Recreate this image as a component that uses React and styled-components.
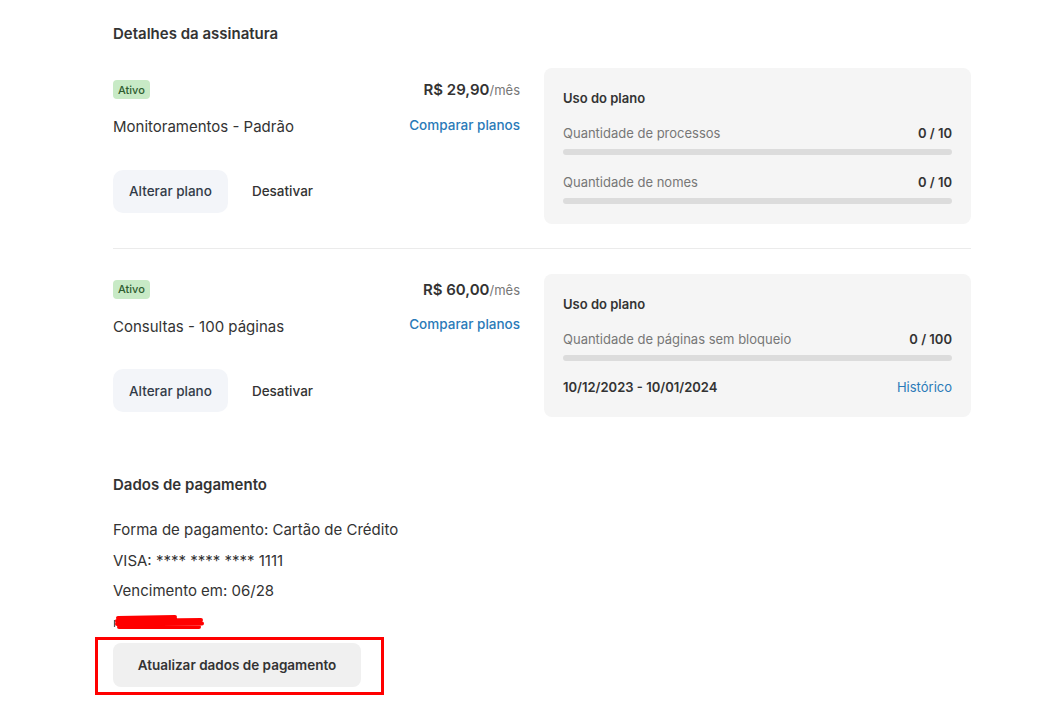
import React from "react";
import styled, { createGlobalStyle } from "styled-components";

const GlobalStyle = createGlobalStyle`
  html, body {
    margin: 0;
    padding: 0;
    background: #fff;
  }
  body {
    font-family: Inter, "Noto Sans", sans-serif;
    color: #333;
    -webkit-font-smoothing: antialiased;
  }
`;

const subscriptions = [
  {
    name: "Monitoramentos - Padrão",
    price: "R$ 29,90",
    metrics: [
      { label: "Quantidade de processos", value: "0 / 10", used: 0 },
      { label: "Quantidade de nomes", value: "0 / 10", used: 0 },
    ],
  },
  {
    name: "Consultas - 100 páginas",
    price: "R$ 60,00",
    metrics: [
      { label: "Quantidade de páginas sem bloqueio", value: "0 / 100", used: 0 },
    ],
    period: "10/12/2023 - 10/01/2024",
  },
];

const App = () => {
  return (
    <>
      <GlobalStyle />
      <Page>
        <SectionTitle>Detalhes da assinatura</SectionTitle>
        {subscriptions.map((sub, i) => (
          <React.Fragment key={sub.name}>
            {i > 0 && <Divider />}
            <PlanRow>
              <PlanInfo>
                <InfoLine>
                  <Badge>Ativo</Badge>
                  <Price>
                    {sub.price}
                    <Per>/mês</Per>
                  </Price>
                </InfoLine>
                <InfoLine $second>
                  <PlanName>{sub.name}</PlanName>
                  <Link href="#">Comparar planos</Link>
                </InfoLine>
                <Actions>
                  <SoftButton>Alterar plano</SoftButton>
                  <GhostButton>Desativar</GhostButton>
                </Actions>
              </PlanInfo>
              <UsageCard>
                <CardTitle>Uso do plano</CardTitle>
                {sub.metrics.map((m) => (
                  <Metric key={m.label}>
                    <MetricRow>
                      <MetricLabel>{m.label}</MetricLabel>
                      <MetricValue>{m.value}</MetricValue>
                    </MetricRow>
                    <Track>
                      <Fill style={{ width: `${m.used}%` }} />
                    </Track>
                  </Metric>
                ))}
                {sub.period && (
                  <PeriodRow>
                    <Period>{sub.period}</Period>
                    <SmallLink href="#">Histórico</SmallLink>
                  </PeriodRow>
                )}
              </UsageCard>
            </PlanRow>
          </React.Fragment>
        ))}

        <PaymentTitle>Dados de pagamento</PaymentTitle>
        <PaymentLines>
          <PayLine>Forma de pagamento: Cartão de Crédito</PayLine>
          <PayLine>VISA: **** **** **** 1111</PayLine>
          <PayLine>Vencimento em: 06/28</PayLine>
          <Redacted>
            {/* marker redaction over the last line */}
            <svg width="92" height="16" viewBox="0 0 92 16">
              <path d="M1.5 6 L1.5 13" stroke="#555" strokeWidth="1.2" />
              <path
                d="M5 4 L62 3 M4 7 L88 6 M4 10 L89 9.5 M6 13 L86 13"
                stroke="#ff0000"
                strokeWidth="4"
                strokeLinecap="round"
                fill="none"
              />
            </svg>
          </Redacted>
        </PaymentLines>
        <Highlight>
          <UpdateButton>Atualizar dados de pagamento</UpdateButton>
        </Highlight>
      </Page>
    </>
  );
};

export default App;

const Page = styled.div`
  width: 858px;
  padding: 24px 0 12px 113px;
  display: flex;
  flex-direction: column;
`;

const SectionTitle = styled.h2`
  margin: 0 0 24px;
  font-size: 15px;
  line-height: 20px;
  font-weight: 600;
  color: #333;
`;

const Divider = styled.div`
  height: 1px;
  background: #ebebeb;
  margin: 24px 0 25px;
`;

const PlanRow = styled.div`
  display: grid;
  grid-template-columns: 407px 427px;
  column-gap: 24px;
  align-items: center;
`;

const PlanInfo = styled.div`
  display: flex;
  flex-direction: column;
`;

const InfoLine = styled.div`
  display: flex;
  justify-content: space-between;
  align-items: center;
  height: ${(p) => (p.$second ? "22px" : "20px")};
  margin-top: ${(p) => (p.$second ? "16px" : "0")};
`;

const Badge = styled.span`
  display: inline-flex;
  align-items: center;
  height: 19px;
  padding: 0 5px;
  border-radius: 4px;
  background: #c8eac6;
  color: #2f5d2f;
  font-size: 11px;
  font-weight: 500;
`;

const Price = styled.span`
  font-size: 15px;
  font-weight: 600;
  color: #333;
`;

const Per = styled.span`
  font-size: 13px;
  font-weight: 400;
  color: #777;
`;

const PlanName = styled.span`
  font-size: 15px;
  color: #333;
`;

const Link = styled.a`
  font-size: 13.5px;
  font-weight: 500;
  color: #2a7ab8;
  text-decoration: none;
  margin-top: -4px;
`;

const Actions = styled.div`
  display: flex;
  align-items: center;
  gap: 8px;
  margin-top: 32px;
`;

const SoftButton = styled.button`
  height: 43px;
  padding: 0 16px;
  border: none;
  border-radius: 10px;
  background: #f3f5f9;
  color: #323b48;
  font-family: inherit;
  font-size: 13.5px;
  font-weight: 500;
  cursor: pointer;
`;

const GhostButton = styled(SoftButton)`
  background: transparent;
  color: #333;
`;

const UsageCard = styled.div`
  background: #f5f5f5;
  border-radius: 8px;
  padding: 20px 19px 20px 19px;
  display: flex;
  flex-direction: column;
`;

const CardTitle = styled.div`
  font-size: 13px;
  line-height: 20px;
  font-weight: 600;
  color: #333;
`;

const Metric = styled.div`
  margin-top: 15px;
  & + & {
    margin-top: 17px;
  }
`;

const MetricRow = styled.div`
  display: flex;
  justify-content: space-between;
  line-height: 20px;
  font-size: 13px;
`;

const MetricLabel = styled.span`
  color: #777;
`;

const MetricValue = styled.span`
  color: #333;
  font-weight: 600;
`;

const Track = styled.div`
  margin-top: 6px;
  height: 6px;
  border-radius: 3px;
  background: #dcdcdc;
  overflow: hidden;
`;

const Fill = styled.div`
  height: 100%;
  background: #2a7ab8;
`;

const PeriodRow = styled.div`
  display: flex;
  justify-content: space-between;
  align-items: center;
  margin-top: 16px;
  line-height: 20px;
  font-size: 13px;
`;

const Period = styled.span`
  font-weight: 600;
  color: #333;
`;

const SmallLink = styled.a`
  color: #2a7ab8;
  text-decoration: none;
`;

const PaymentTitle = styled.h3`
  margin: 58px 0 0;
  font-size: 15px;
  line-height: 20px;
  font-weight: 600;
  color: #333;
`;

const PaymentLines = styled.div`
  margin-top: 25px;
  display: flex;
  flex-direction: column;
`;

const PayLine = styled.div`
  font-size: 15px;
  line-height: 20px;
  color: #333;
  & + & {
    margin-top: 10.5px;
  }
`;

const Redacted = styled.div`
  margin-top: 13px;
  height: 16px;
  display: flex;
  align-items: center;
`;

const Highlight = styled.div`
  align-self: flex-start;
  margin: 7px 0 0 -18px;
  padding: 3px 20px 5px 15px;
  border: 3px solid #ff0000;
`;

const UpdateButton = styled.button`
  display: block;
  width: 248px;
  height: 44px;
  border: none;
  border-radius: 8px;
  background: #f0f0f0;
  color: #333;
  font-family: inherit;
  font-size: 13.5px;
  font-weight: 600;
  cursor: pointer;
`;
